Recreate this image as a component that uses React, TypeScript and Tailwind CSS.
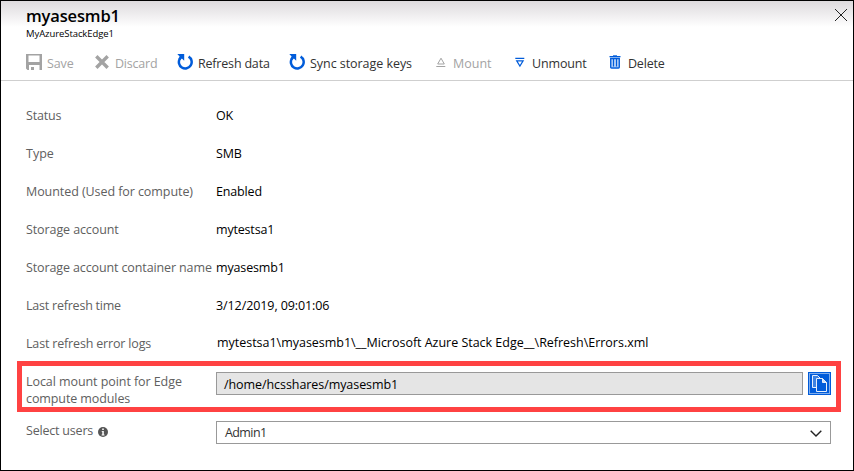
import type { ReactNode } from "react";

const blue = "#015cda";

function SaveIcon() {
  return (
    <svg width="16" height="16" viewBox="0 0 16 16" className="block">
      <path fill="#a3a3a3" fillRule="evenodd" d="M0 0H16V16H13.5V11H3V16H1.5L0 14.5ZM2.5 1.5V8H13.5V1.5Z" />
      <path fill="#a3a3a3" d="M5 13H8V16H5Z" />
    </svg>
  );
}
function DiscardIcon() {
  return (
    <svg width="14" height="14" viewBox="0 0 14 14" className="block">
      <path stroke="#a3a3a3" strokeWidth="3.4" d="M1.3 1.3L12.7 12.7M12.7 1.3L1.3 12.7" />
    </svg>
  );
}
function RefreshIcon() {
  return (
    <svg width="16" height="16" viewBox="0 0 16 16" className="block">
      <path fill="none" stroke={blue} strokeWidth="2.5" d="M11.6 2.6A6.4 6.4 0 1 1 2.9 4.6" />
      <path fill={blue} d="M0.3 0H7.2V6.8L4.9 4.6L3.4 6L1.4 4.4L2.6 2.4Z" />
    </svg>
  );
}
function MountIcon() {
  return (
    <svg width="11" height="11" viewBox="0 0 11 11" className="block">
      <path fill="none" stroke="#a3a3a3" d="M1.7 7L5 1.2L8.3 7ZM0.3 9.5H9.3" />
    </svg>
  );
}
function UnmountIcon() {
  return (
    <svg width="11" height="11" viewBox="0 0 11 11" className="block">
      <path fill="none" stroke={blue} strokeWidth="1.2" d="M0.3 1.3H9.3M1.7 3.8H8.1L4.9 9Z" />
    </svg>
  );
}
function DeleteIcon() {
  return (
    <svg width="12" height="14" viewBox="0 0 12 14" className="-ml-px block">
      <path fill="#4f8fe6" d="M4 0H8V1H4Z" />
      <path fill={blue} d="M0.5 1H11.5V2.3H0.5Z" />
      <path fill="#a9c9f5" d="M2 3H10V12.5H2Z" />
      <path fill="none" stroke={blue} strokeWidth="1.3" d="M1.7 3.5H10.3V12.2Q10.3 13 9.5 13H2.5Q1.7 13 1.7 12.2Z" />
      <path stroke={blue} d="M4.5 4V11.5M7.5 4V11.5" />
    </svg>
  );
}

function CopyIcon() {
  return (
    <svg width="23" height="23" viewBox="0 0 23 23" className="block">
      <rect x="1.5" y="1.5" width="20" height="20" fill="none" stroke="white" strokeDasharray="1 1" />
      <path fill="#3d82e2" stroke="#e6effc" d="M4.5 3.5H9.5L12.5 6.5V15.5H4.5Z" />
      <path fill={blue} stroke="#e6effc" d="M8.5 6.5H14.5L18.5 10.5V19.5H8.5Z" />
      <path fill="#cfe0f8" stroke="#e6effc" d="M14.5 6.5V10.5H18.5Z" />
    </svg>
  );
}

function Command({ slot, gap, disabled, icon, children, track }: { slot: string; gap: string; disabled?: boolean; icon: ReactNode; children: string; track: string }) {
  return (
    <button className={`flex h-4 shrink-0 items-center text-left ${slot} ${disabled ? "text-[#a3a3a3]" : "text-[#323232]"}`}>
      <span className={`shrink-0 ${gap}`}>{icon}</span>
      <span className={`pt-[2px] whitespace-nowrap ${track}`}>{children}</span>
    </button>
  );
}

function Row({ label, labelTrack, value, valueTrack }: { label: string; labelTrack: string; value: string; valueTrack: string }) {
  return (
    <div className="flex h-[38px] items-center">
      <dt className="w-[190px] shrink-0 whitespace-nowrap text-[#606060]"><span className={labelTrack}>{label}</span></dt>
      <dd className="whitespace-nowrap text-black"><span className={valueTrack}>{value}</span></dd>
    </div>
  );
}

export default function App() {
  return (
    <main className="h-[471px] w-[854px] overflow-hidden border border-black bg-white font-['Open_Sans','Noto_Sans',sans-serif] text-[12.5px] leading-[17px]">
      <header className="flex h-[50px] justify-between bg-linear-to-b from-[#dddadd] to-white to-[26px] pl-[25px] pr-[6px]">
        <div className="pt-[4px]">
          <h1 className="text-[16.5px] leading-[22px] font-semibold tracking-[-0.15px] text-black">myasesmb1</h1>
          <p className="text-[9.5px] leading-[13px] tracking-[-0.08px] text-black">MyAzureStackEdge1</p>
        </div>
        <svg width="12" height="12" viewBox="0 0 12 12" className="mt-[8px]"><path stroke="#222" d="M0 0L12 12M12 0L0 12" /></svg>
      </header>
      <nav className="flex h-[30px] items-start border-b border-[#cfcfcf] pt-[3px] pl-[25px]">
        <Command slot="w-[69px]" gap="w-[21px]" disabled icon={<SaveIcon />} track="tracking-[-0.1px]">Save</Command>
        <Command slot="w-[82px]" gap="w-5" disabled icon={<DiscardIcon />} track="tracking-[-0.2px]">Discard</Command>
        <Command slot="w-[112px]" gap="w-[21px]" icon={<RefreshIcon />} track="tracking-[-0.19px]">Refresh data</Command>
        <Command slot="w-[147px]" gap="w-[21px]" icon={<RefreshIcon />} track="tracking-[-0.05px]">Sync storage keys</Command>
        <Command slot="w-[79px]" gap="w-[17px]" disabled icon={<MountIcon />} track="">Mount</Command>
        <Command slot="w-[95px]" gap="w-[17px]" icon={<UnmountIcon />} track="tracking-[-0.15px]">Unmount</Command>
        <Command slot="w-[70px]" gap="w-[18px]" icon={<DeleteIcon />} track="tracking-[-0.2px]">Delete</Command>
      </nav>
      <dl className="h-[280px] pt-[15px] pl-[25px]">
        <Row label="Status" labelTrack="tracking-[-0.2px]" value="OK" valueTrack="tracking-[-0.2px]" />
        <Row label="Type" labelTrack="" value="SMB" valueTrack="tracking-[-0.2px]" />
        <Row label="Mounted (Used for compute)" labelTrack="tracking-[-0.07px]" value="Enabled" valueTrack="tracking-[-0.15px]" />
        <Row label="Storage account" labelTrack="tracking-[-0.1px]" value="mytestsa1" valueTrack="tracking-[-0.18px]" />
        <Row label="Storage account container name" labelTrack="tracking-[-0.12px]" value="myasesmb1" valueTrack="tracking-[-0.15px]" />
        <Row label="Last refresh time" labelTrack="tracking-[-0.22px]" value="3/12/2019, 09:01:06" valueTrack="tracking-[-0.09px]" />
        <Row label="Last refresh error logs" labelTrack="tracking-[-0.17px]" value="mytestsa1\myasesmb1\__Microsoft Azure Stack Edge__\Refresh\Errors.xml" valueTrack="block pb-[2px] pl-px tracking-[-0.02px]" />
      </dl>
      <section className="ml-4 flex h-[51px] w-[824px] border-[5px] border-[#ff4242] pt-[6px] pl-1">
        <p className="w-[190px] shrink-0 pt-px text-[#606060]"><span className="tracking-[-0.07px]">Local mount point for Edge</span><br /><span className="tracking-[-0.1px]">compute modules</span></p>
        <div className="flex h-[23px] w-[587px] items-center border border-[#999] bg-[#e5e5e5] pt-px pl-[7px] tracking-[-0.07px] text-black">/home/hcsshares/myasesmb1</div>
        <button className="ml-[5px] h-[23px] w-[23px] bg-[#015cda]"><CopyIcon /></button>
      </section>
      <div className="flex pt-[9px] pl-[25px]">
        <div className="flex h-[19px] w-[190px] items-center text-[#606060]"><span className="tracking-[-0.2px]">Select users</span>
          <svg width="10" height="10" viewBox="0 0 10 10" className="mt-[3px] ml-[5px]"><circle cx="5" cy="5" r="5" fill="#555" /><path fill="white" d="M4.2 1.5H5.8V3H4.2ZM3.7 4H5.8V7.5H6.5V8.4H3.6V7.5H4.3V4.8H3.7Z" /></svg>
        </div>
        <div className="flex h-[23px] w-[615px] items-center justify-between border border-[#999] pr-[8px] pl-2 text-[#323232]"><span className="tracking-[-0.6px]">Admin1</span>
          <svg width="12" height="7" viewBox="0 0 12 7" className="mt-px"><path fill="none" stroke="#222" strokeWidth="1.4" d="M0.7 0.7L6 6L11.3 0.7" /></svg>
        </div>
      </div>
    </main>
  );
}
